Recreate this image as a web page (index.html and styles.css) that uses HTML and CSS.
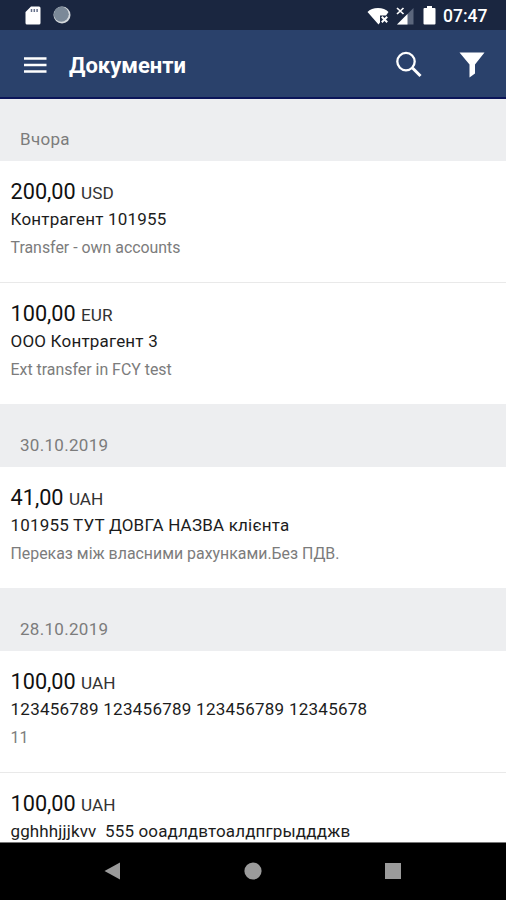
FILE: index.html
```html
<!DOCTYPE html>
<html lang="uk">
<head>
  <meta charset="UTF-8">
  <title>Документи</title>
  <meta name="viewport" content="width=device-width, initial-scale=1">
  <link rel="stylesheet" href="styles.css">
</head>
<body>
<div class="screen">
  <div class="status-bar">
    <svg class="sd" width="16" height="19" viewBox="0 0 16 19"><path d="M6 0.5h8a1.5 1.5 0 0 1 1.500 1.500v15a1.500 1.500 0 0 1-1.500 1.500H2A1.500 1.500 0 0 1 .5 17V6z" fill="#fff"/><path d="M6.500 3v3M9.300 3v3M12.100 3v3" stroke="#65708a" stroke-width="1.500"/></svg>
    <svg class="sync" width="18" height="18" viewBox="0 0 18 18"><circle cx="9" cy="9" r="8.500" fill="#d5d9dc"/><circle cx="8.300" cy="8.200" r="7.500" fill="#7b8998"/></svg>
    <div class="status-right">
      <svg width="23" height="18" viewBox="0 0 23 18"><path d="M.5 5C5-.5 17-.5 21.500 5l-2.500 3.500h-6v7L11.500 17.500z" fill="#fff"/><path d="M14.800 9.800l5.400 5.400M20.200 9.800l-5.400 5.400" stroke="#fff" stroke-width="2"/></svg>
      <svg class="signal" width="18" height="18" viewBox="0 0 18 18"><path d="M17.500 1v16.500H1z" fill="#5b667c"/><path d="M11.500 7v10.500H1z" fill="#fff"/><path d="M1 1l6.500 6M7.500 1L1 7" stroke="#fff" stroke-width="1.700"/></svg>
      <svg class="battery" width="13" height="19" viewBox="0 0 13 19"><path d="M4 0h5v2h2.500a1 1 0 0 1 1 1v14.500a1 1 0 0 1-1 1h-10a1 1 0 0 1-1-1V3a1 1 0 0 1 1-1H4z" fill="#fff"/></svg>
      <span class="time">07:47</span>
    </div>
  </div>

  <div class="app-bar">
    <svg class="menu" width="23" height="16" viewBox="0 0 23 16"><path d="M0 1.500h22.500M0 8h22.500M0 14.500h22.500" stroke="#fff" stroke-width="2.600"/></svg>
    <h1>Документи</h1>
    <svg class="search" width="26" height="27" viewBox="0 0 26 27"><circle cx="10" cy="10.600" r="8.700" fill="none" stroke="#fff" stroke-width="2.300"/><path d="M16.500 17l8 8" stroke="#fff" stroke-width="3"/></svg>
    <svg class="filter" width="26" height="26" viewBox="0 0 26 26"><path d="M.5.500h25L16 12.500v9L10.500 25.500v-13z" fill="#fff"/></svg>
  </div>

  <div class="list">
    <div class="date first">Вчора</div>
    <div class="item line">
      <div class="amount">200,00 <span>USD</span></div>
      <div class="name">Контрагент 101955</div>
      <div class="desc">Transfer - own accounts</div>
    </div>
    <div class="item">
      <div class="amount">100,00 <span>EUR</span></div>
      <div class="name">ООО Контрагент 3</div>
      <div class="desc">Ext transfer in FCY test</div>
    </div>
    <div class="date">30.10.2019</div>
    <div class="item">
      <div class="amount">41,00 <span>UAH</span></div>
      <div class="name">101955 ТУТ ДОВГА НАЗВА клієнта</div>
      <div class="desc">Переказ між власними рахунками.Без ПДВ.</div>
    </div>
    <div class="date">28.10.2019</div>
    <div class="item line">
      <div class="amount">100,00 <span>UAH</span></div>
      <div class="name digits">123456789 123456789 123456789 12345678</div>
      <div class="desc">11</div>
    </div>
    <div class="item">
      <div class="amount">100,00 <span>UAH</span></div>
      <div class="name tight">gghhhjjjkvv&nbsp; 555 ооадлдвтоалдпгрыддджв</div>
    </div>
  </div>

  <div class="nav-bar">
    <svg width="18" height="18" viewBox="0 0 18 18"><path d="M.5 9L16 .5v17z" fill="#9b9b9b"/></svg>
    <svg width="18" height="18" viewBox="0 0 18 18"><circle cx="9" cy="9" r="8.600" fill="#9b9b9b"/></svg>
    <svg width="18" height="18" viewBox="0 0 18 18"><path d="M1 1h16v16H1z" fill="#9b9b9b"/></svg>
  </div>
</div>
</body>
</html>
```

FILE: styles.css
```css
body {
  margin: 0;
  background: #fff;
  font-family: Roboto, sans-serif;
}
.screen {
  display: flex;
  flex-direction: column;
  height: 900px;
  width: 506px;
  overflow: hidden;
}
.status-bar {
  display: flex;
  align-items: center;
  height: 30px;
  padding: 0 18px 0 25px;
  box-sizing: border-box;
  background: #1a2640;
  flex-shrink: 0;
}
.sync { margin-left: 12px; }
.status-right {
  display: flex;
  align-items: center;
  margin-left: auto;
}
.status-right > svg { margin-top: 1px; }
.signal { margin-left: 6px; }
.battery { margin-left: 9px; }
.time {
  width: 45px;
  margin-left: 7px;
  color: #fff;
  font-size: 17.5px;
  font-weight: 500;
  line-height: 30px;
  padding-top: 1px;
  white-space: nowrap;
}
.app-bar {
  display: flex;
  align-items: center;
  height: 69px;
  padding: 2px 21px 0 24px;
  box-sizing: border-box;
  background: #2a416b;
  border-bottom: 2px solid #0b1559;
  flex-shrink: 0;
}
h1 {
  margin: 3px 0 0 22px;
  color: #fff;
  font-size: 22px;
  font-weight: 700;
  line-height: 28px;
}
.search { margin-left: auto; }
.filter { margin-left: 37px; }
.list {
  flex: 1;
  overflow: hidden;
}
.date {
  height: 63px;
  padding: 30px 20px 0;
  box-sizing: border-box;
  background: #edeef0;
  color: #7c7c7c;
  font-size: 17px;
  line-height: 22px;
  letter-spacing: 0.3px;
}
.date.first {
  height: 62px;
  padding-top: 29px;
}
.item {
  height: 121px;
  padding: 17px 10.5px 0;
  box-sizing: border-box;
}
.item.line {
  height: 122px;
  border-bottom: 1px solid #e9e9e9;
}
.amount {
  color: #111;
  font-size: 21.7px;
  line-height: 28px;
}
.amount span {
  color: #333;
  font-size: 17.2px;
}
.name {
  color: #1c1c1c;
  font-size: 17px;
  line-height: 24px;
  letter-spacing: 0.2px;
  white-space: nowrap;
}
.name.digits { letter-spacing: 0.26px; }
.name.tight { letter-spacing: 0.13px; }
.desc {
  color: #7c7c7c;
  font-size: 15.9px;
  line-height: 28px;
  padding-top: 3px;
  white-space: nowrap;
}
.nav-bar {
  display: flex;
  align-items: center;
  justify-content: center;
  gap: 122px;
  height: 58px;
  padding-bottom: 2px;
  box-sizing: border-box;
  background: #000;
  border-top: 1px solid #777;
  flex-shrink: 0;
}
```
